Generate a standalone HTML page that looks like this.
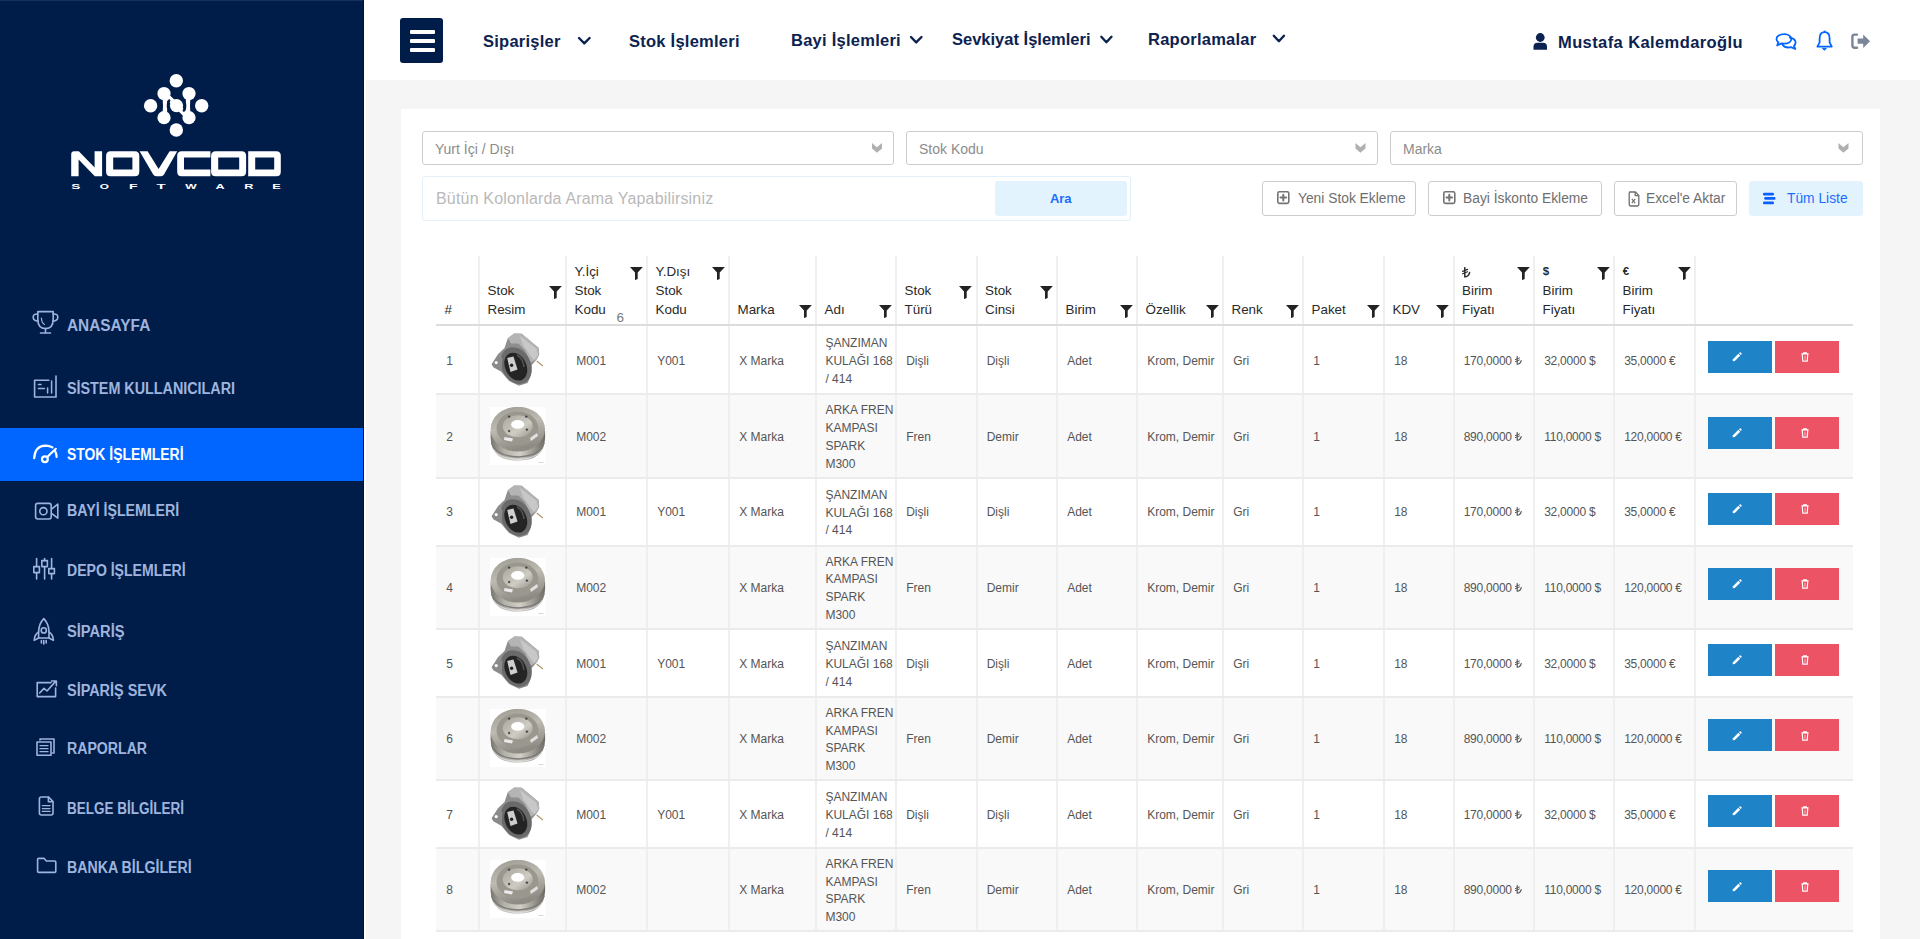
<!DOCTYPE html>
<html><head><meta charset="utf-8">
<style>
*{box-sizing:border-box;margin:0;padding:0}
html,body{width:1920px;height:939px;overflow:hidden;background:#f5f5f5;font-family:"Liberation Sans",sans-serif}
.abs{position:absolute}
#side{position:absolute;left:0;top:0;width:364px;height:939px;background:#001d4a}
#strip{position:absolute;left:364px;top:0;width:2px;height:939px;background:#fff}
#hdr{position:absolute;left:364px;top:0;width:1556px;height:80px;background:#fff}
#card{position:absolute;left:401px;top:109px;width:1479px;height:830px;background:#fff}
.mi{position:absolute;left:0;width:364px;height:54px}
.mi .t{position:absolute;left:67px;top:0;line-height:54px;font-weight:bold;font-size:15px;color:#9fb4dd;white-space:nowrap}
.mi svg{position:absolute;left:33px;top:15px}
.smt{position:absolute;left:67px;height:20px;line-height:20px;font-size:16px;font-weight:bold;white-space:nowrap;transform:scaleX(0.9);transform-origin:0 0}
.th{position:absolute;font-size:13.4px;line-height:18px;color:#2a2a2a;white-space:nowrap}
.td{position:absolute;font-size:12px;color:#555;white-space:nowrap}
.nav{position:absolute;font-weight:bold;font-size:16.5px;letter-spacing:0.25px;color:#0c2250;white-space:nowrap;line-height:20px}
.chev{position:absolute}
.sel{position:absolute;top:130.5px;height:34.5px;border:1px solid #cdcdcd;border-radius:3px;background:#fff;font-size:14px;color:#8c8c8c;line-height:34px;padding-left:12px;white-space:nowrap}
.btn{position:absolute;top:181px;height:34.5px;border:1px solid #cdcdcd;border-radius:3px;background:#fff;font-size:13.8px;color:#6e6e6e;line-height:33px;white-space:nowrap}
.pl{position:absolute;top:9.5px;width:12.3px;height:12.7px;border:1.6px solid #747474;border-radius:2px}
.pl:before{content:"";position:absolute;left:1.5px;top:3.75px;width:6.1px;height:2px;background:#747474;border-radius:1px}
.pl:after{content:"";position:absolute;left:3.55px;top:1.7px;width:2px;height:6.1px;background:#747474;border-radius:1px}
</style></head>
<body>
<svg width="0" height="0" style="position:absolute">
<defs>
<linearGradient id="gs" x1="0" y1="0" x2="1" y2="0">
<stop offset="0" stop-color="#7a776f"/><stop offset="0.25" stop-color="#b4b1a9"/><stop offset="0.55" stop-color="#d2cfc7"/><stop offset="0.8" stop-color="#99968e"/><stop offset="1" stop-color="#6c6963"/>
</linearGradient>
<linearGradient id="gt" x1="0" y1="0" x2="0.3" y2="1">
<stop offset="0" stop-color="#9c9991"/><stop offset="0.5" stop-color="#bdbab2"/><stop offset="1" stop-color="#8e8b84"/>
</linearGradient>
<linearGradient id="gh" x1="0" y1="0" x2="1" y2="1">
<stop offset="0" stop-color="#a7a49c"/><stop offset="0.6" stop-color="#cfccc4"/><stop offset="1" stop-color="#97948c"/>
</linearGradient>


</defs>
</svg>

<div id="side">
<svg class="abs" style="left:140px;top:70px" width="72" height="70" viewBox="0 0 72 70">
<g fill="#fff" stroke="none">
<circle cx="36.3" cy="10.8" r="6.7"/>
<circle cx="24" cy="23.5" r="6.6"/>
<circle cx="49" cy="23.5" r="6.6"/>
<circle cx="10.6" cy="35.8" r="6.7"/>
<circle cx="36.5" cy="35.6" r="6.6"/>
<circle cx="61.7" cy="35.8" r="6.7"/>
<circle cx="24" cy="47.7" r="6.6"/>
<circle cx="49" cy="47.7" r="6.6"/>
<circle cx="36.3" cy="60" r="6.7"/>
</g>
<g stroke="#fff" stroke-width="4.4" fill="none" stroke-linecap="round">
<path d="M24 23.5 Q26.4 35.6 24 47.7"/>
<path d="M49 23.5 Q46.6 35.6 49 47.7"/>
<path d="M24 23.5 L36.5 35.6" stroke-width="5.5"/>
<path d="M49 47.7 L36.5 35.6" stroke-width="5.5"/>
</g>
<g stroke="#001d4a" stroke-width="2.4" fill="none" stroke-linecap="round">
<path d="M31.2 42.2 A8.6 8.6 0 0 1 29.2 30.6"/>
<path d="M41.8 29 A8.6 8.6 0 0 1 43.8 40.6"/>
</g>
</svg>
<svg class="abs" style="left:66px;top:145px" width="220" height="50" viewBox="0 0 220 50">
<g fill="#fff" fill-rule="evenodd">
<path d="M5.2 31.2V9.3Q5.2 6.3 8.2 6.3H12.8L28.6 22.6V6.3H36.1V31.2H28.8L12.6 14.6V31.2Z"/>
<path d="M44.6 6.3H68.8Q73.3 6.3 73.3 10.8V26.7Q73.3 31.2 68.8 31.2H44.6Q40.1 31.2 40.1 26.7V10.8Q40.1 6.3 44.6 6.3ZM47.2 12.6V24.6H66.4V12.6Z"/>
<path d="M73.6 6.3H81.6L92.6 24L103.6 6.3H111.2L98 29.6Q97 31.2 95 31.2H90.2Q88.2 31.2 87.2 29.6Z"/>
<path d="M144.4 6.3H115.7Q111.2 6.3 111.2 10.8V26.7Q111.2 31.2 115.7 31.2H144.4V24.6H118V12.6H144.4Z"/>
<path d="M149.6 6.3H175.6Q180.1 6.3 180.1 10.8V26.7Q180.1 31.2 175.6 31.2H149.6Q145.1 31.2 145.1 26.7V10.8Q145.1 6.3 149.6 6.3ZM152.2 12.6V24.6H173.2V12.6Z"/>
<path d="M182.2 6.3H210.3Q214.8 6.3 214.8 10.8V26.7Q214.8 31.2 210.3 31.2H182.2ZM189.2 12.6V24.6H208.2V12.6Z"/>
</g>
<g fill="#fff" font-family="Liberation Sans" font-weight="bold" font-size="7.8">
<text x="5.2" y="44.1" textLength="9.1" lengthAdjust="spacingAndGlyphs">S</text>
<text x="33.8" y="44.1" textLength="9.2" lengthAdjust="spacingAndGlyphs">O</text>
<text x="63" y="44.1" textLength="8.6" lengthAdjust="spacingAndGlyphs">F</text>
<text x="90.5" y="44.1" textLength="9.2" lengthAdjust="spacingAndGlyphs">T</text>
<text x="119.2" y="44.1" textLength="11.4" lengthAdjust="spacingAndGlyphs">W</text>
<text x="149.5" y="44.1" textLength="9.2" lengthAdjust="spacingAndGlyphs">A</text>
<text x="178.2" y="44.1" textLength="9.2" lengthAdjust="spacingAndGlyphs">R</text>
<text x="206.3" y="44.1" textLength="8.5" lengthAdjust="spacingAndGlyphs">E</text>
</g>
</svg>
<div class="abs" style="left:0;top:428px;width:364px;height:53px;background:#0066ff"></div>
<!-- icons -->
<svg class="abs" style="left:0;top:0" width="364" height="939" viewBox="0 0 364 939" fill="none" stroke="#9fb4dd" stroke-width="1.6" stroke-linecap="round" stroke-linejoin="round">
<!-- trophy -->
<path d="M37.8 311.6H53.2V319Q53.2 328.6 45.5 328.6Q37.8 328.6 37.8 319Z"/>
<path d="M37.8 314Q33.2 313.6 33.2 317.2Q33.2 320.8 38.2 321.2"/>
<path d="M53.2 314Q57.8 313.6 57.8 317.2Q57.8 320.8 52.8 321.2"/>
<path d="M45.5 328.6V332.8M40.5 333H50.5"/>
<path d="M41.4 318Q41.6 322.6 44.4 324.4" stroke-width="1.2"/>
<!-- sistem kullanicilari -->
<path d="M34.6 380.2H48.8M34.6 380.2V397H56.2M56 376V396.5"/>
<path d="M38.4 384.6H41M38.4 388.6H44.4M47.6 388V393M51.6 381V393" stroke-width="1.5"/>
</svg>
<svg class="abs" style="left:0;top:0" width="364" height="939" viewBox="0 0 364 939" fill="none" stroke="#fff" stroke-width="2" stroke-linecap="round" stroke-linejoin="round">
<!-- gauge -->
<path d="M34.2 458.2Q34.8 446 45.4 445.6Q49.6 445.6 52.4 447.4" stroke-width="2.2"/>
<path d="M55.2 451.2Q56.6 453.8 56.6 457" stroke-width="2.2"/>
<circle cx="44.9" cy="459.2" r="2.9" stroke-width="2.2"/>
<path d="M47 457.2L55.8 448.8" stroke-width="2.2"/>
</svg>
<svg class="abs" style="left:0;top:0" width="364" height="939" viewBox="0 0 364 939" fill="none" stroke="#9fb4dd" stroke-width="1.6" stroke-linecap="round" stroke-linejoin="round">
<!-- camera -->
<rect x="35.6" y="503.4" width="15.6" height="15.6" rx="2.2"/>
<circle cx="43.4" cy="511.2" r="3.6"/>
<path d="M52.2 508.6L57.8 504.2V518.2L52.2 513.8"/>
<!-- sliders -->
<path d="M36.6 558.6V566.6M36.6 572.6V579M44.6 558.6V560.6M44.6 566.6V579M51.6 558.6V568.6M51.6 573.6V579"/>
<rect x="33.8" y="566.6" width="5.6" height="6"/>
<rect x="41.8" y="560.6" width="5.6" height="6"/>
<rect x="48.8" y="568.6" width="5.6" height="5"/>
<!-- rocket -->
<path d="M43.8 618.6Q38.6 624 38.6 632V638H49V632Q49 624 43.8 618.6Z"/>
<circle cx="43.8" cy="630.4" r="2.6"/>
<path d="M38.6 632Q34.4 634.6 34.2 640.4L38.6 638M49 632Q53.2 634.6 53.4 640.4L49 638"/>
<path d="M41.4 640.6V643M43.8 640.6V644M46.2 640.6V643"/>
<!-- chart -->
<path d="M51 682.6H37.2V696.6H55.6V688"/>
<path d="M39.6 693L44 688.4L47 691L55.6 681.4M51.6 681H56.4V685.8"/>
<!-- stacked docs -->
<rect x="37" y="742" width="14" height="13.2"/>
<path d="M40 740V739H54V753H52.6"/>
<path d="M40 745.6H48M40 748.6H48M40 751.6H48" stroke-width="1.4"/>
<!-- document -->
<path d="M41.4 797H48.6L53 801.6V813Q53 815 51 815H41.4Q39.4 815 39.4 813V799Q39.4 797 41.4 797Z"/>
<path d="M48.4 797.4V801.8H52.6"/>
<path d="M42.4 805.6H50M42.4 808.6H50M42.4 811.4H50" stroke-width="1.4"/>
<!-- folder -->
<path d="M37.6 859.6Q37.6 858.4 38.8 858.4H44.2L46.4 861H54.6Q55.8 861 55.8 862.2V871.2Q55.8 872.4 54.6 872.4H38.8Q37.6 872.4 37.6 871.2Z"/>
</svg>
<div class="smt" style="top:315.6px;color:#9fb4dd;transform:scaleX(0.962)">ANASAYFA</div>
<div class="smt" style="top:379.3px;color:#9fb4dd;transform:scaleX(0.896)">SİSTEM KULLANICILARI</div>
<div class="smt" style="top:445.0px;color:#fff;transform:scaleX(0.870)">STOK İŞLEMLERİ</div>
<div class="smt" style="top:501.3px;color:#9fb4dd;transform:scaleX(0.886)">BAYİ İŞLEMLERİ</div>
<div class="smt" style="top:561.3px;color:#9fb4dd;transform:scaleX(0.878)">DEPO İŞLEMLERİ</div>
<div class="smt" style="top:622.3px;color:#9fb4dd;transform:scaleX(0.916)">SİPARİŞ</div>
<div class="smt" style="top:681.2px;color:#9fb4dd;transform:scaleX(0.902)">SİPARİŞ SEVK</div>
<div class="smt" style="top:739.4px;color:#9fb4dd;transform:scaleX(0.883)">RAPORLAR</div>
<div class="smt" style="top:798.5px;color:#9fb4dd;transform:scaleX(0.844)">BELGE BİLGİLERİ</div>
<div class="smt" style="top:857.8px;color:#9fb4dd;transform:scaleX(0.886)">BANKA BİLGİLERİ</div>
</div>
<div id="strip"></div>
<div class="abs" style="left:0;top:0;width:364px;height:1px;background:#15305c"></div>
<div class="abs" style="left:363px;top:0;width:1px;height:939px;background:#000f3c"></div>
<div id="hdr"></div>
<div class="abs" style="left:400px;top:18px;width:43px;height:45px;background:#001d4a;border-radius:3px"></div>
<div class="abs" style="left:409.5px;top:29.5px;width:25px;height:4.4px;background:#fff;border-radius:1px"></div>
<div class="abs" style="left:409.5px;top:38.5px;width:25px;height:4.4px;background:#fff;border-radius:1px"></div>
<div class="abs" style="left:409.5px;top:47.5px;width:25px;height:4.4px;background:#fff;border-radius:1px"></div>
<div class="nav" style="left:483px;top:30.7px">Siparişler</div>
<div class="nav" style="left:629px;top:30.7px">Stok İşlemleri</div>
<div class="nav" style="left:791px;top:29.8px">Bayi İşlemleri</div>
<div class="nav" style="left:952px;top:29.4px;letter-spacing:0">Sevkiyat İşlemleri</div>
<div class="nav" style="left:1148px;top:29px">Raporlamalar</div>
<svg class="abs" style="left:0;top:0" width="1920" height="80" viewBox="0 0 1920 80" fill="none" stroke="#0c2250" stroke-width="2.4" stroke-linecap="round" stroke-linejoin="round">
<path d="M579 38L584.3 43.3L589.6 38"/>
<path d="M911 37L916.2 42.4L921.5 37"/>
<path d="M1101.3 36.8L1106.4 42.2L1111.5 36.8"/>
<path d="M1273.8 35.8L1278.9 41.2L1284 35.8"/>
</svg>
<svg class="abs" style="left:1530px;top:30px" width="20" height="22" viewBox="0 0 20 22">
<circle cx="10.25" cy="7.5" r="4.4" fill="#0c2250"/>
<path d="M3.5 19.75V16.75Q3.5 12.75 7.5 12.75H13Q17 12.75 17 16.75V19.75Z" fill="#0c2250"/>
</svg>
<div class="nav" style="left:1558px;top:32.3px;letter-spacing:0.4px">Mustafa Kalemdaroğlu</div>
<svg class="abs" style="left:1770px;top:28px" width="110" height="26" viewBox="1770 28 110 26" fill="none" stroke-linejoin="round" stroke-linecap="round">
<g stroke="#0066ff" stroke-width="1.8">
<path d="M1784.3 34.2C1788.6 34.2 1791.3 36.4 1791.3 38.9C1791.3 41.5 1788.6 43.6 1784.3 43.6C1783.4 43.6 1782.6 43.5 1781.8 43.3L1777.2 45.3L1778.4 42.2C1777.1 41.4 1776.5 40.2 1776.5 38.9C1776.5 36.4 1779.6 34.2 1784.3 34.2Z"/>
<path d="M1789.8 37.6C1793.3 38.2 1795.6 40.3 1795.6 42.6C1795.6 43.9 1795 45 1794 45.8L1795.3 49L1791 47.2C1790.2 47.4 1789.4 47.5 1788.5 47.5C1785.6 47.5 1783.2 46.2 1782.4 44.2"/>
</g>
<g stroke="#0066ff" stroke-width="1.8">
<path d="M1824.6 32.2C1821.2 32.2 1819.6 35 1819.6 38.6V42.4L1817.4 46.6H1831.8L1829.6 42.4V38.6C1829.6 35 1828 32.2 1824.6 32.2Z"/>
</g>
<path d="M1822.8 48.4H1826.4L1824.6 50Z" fill="#0066ff" stroke="#0066ff" stroke-width="1"/>
<circle cx="1824.6" cy="31.6" r="1" fill="#0066ff"/>
<g>
<path d="M1857 34.6H1854.6Q1852.4 34.6 1852.4 36.8V45.6Q1852.4 47.8 1854.6 47.8H1857" stroke="#7a8599" stroke-width="2.4"/>
<path d="M1857.6 38.6H1863.2V34.4L1870 41.2L1863.2 48V43.8H1857.6Z" fill="#7a8599"/>
</g>
</svg>

<div id="card"></div>
<div class="sel" style="left:422px;width:472px">Yurt İçi / Dışı</div>
<div class="sel" style="left:906px;width:472px">Stok Kodu</div>
<div class="sel" style="left:1390px;width:473px">Marka</div>
<svg class="abs" style="left:0;top:0" width="1920" height="240" viewBox="0 0 1920 240">
<g fill="#b0b0b0">
<path d="M872 143.1L876.9 147.2L882 143.1V148.6L876.9 152.7L872 148.6Z"/>
<path d="M1355.5 143.1L1360.4 147.2L1365.5 143.1V148.6L1360.4 152.7L1355.5 148.6Z"/>
<path d="M1838.5 143.1L1843.4 147.2L1848.5 143.1V148.6L1843.4 152.7L1838.5 148.6Z"/>
</g>
</svg>
<div class="abs" style="left:421.5px;top:176px;width:709px;height:45px;border:1px solid #e1f0fa;border-radius:3px;background:#fff"></div>
<div class="abs" style="left:436px;top:187px;font-size:16px;line-height:24px;color:#b9b9b9;white-space:nowrap;letter-spacing:0.18px">Bütün Kolonlarda Arama Yapabilirsiniz</div>
<div class="abs" style="left:994.5px;top:181px;width:132.5px;height:35px;background:#e3f3fd;border-radius:3px;text-align:center;font-size:13px;font-weight:bold;color:#1a6dff;line-height:35px">Ara</div>
<div class="btn" style="left:1262px;width:153.5px"><svg style="position:absolute;left:14px;top:9px" width="14" height="14" viewBox="0 0 14 14" fill="none" stroke="#747474"><rect x="0.8" y="0.8" width="11" height="11.6" rx="1.6" stroke-width="1.6"/><path d="M6.3 3.8V9.4M3.5 6.6H9.1" stroke-width="2" stroke-linecap="round"/></svg><span style="position:absolute;left:35px">Yeni Stok Ekleme</span></div>
<div class="btn" style="left:1428px;width:173.5px"><svg style="position:absolute;left:14px;top:9px" width="14" height="14" viewBox="0 0 14 14" fill="none" stroke="#747474"><rect x="0.8" y="0.8" width="11" height="11.6" rx="1.6" stroke-width="1.6"/><path d="M6.3 3.8V9.4M3.5 6.6H9.1" stroke-width="2" stroke-linecap="round"/></svg><span style="position:absolute;left:34px">Bayi İskonto Ekleme</span></div>
<div class="btn" style="left:1614px;width:122.5px"><svg style="position:absolute;left:12.5px;top:8.5px" width="12" height="16" viewBox="0 0 12 16" fill="none" stroke="#6e6e6e" stroke-width="1.3" stroke-linejoin="round"><path d="M1.6 1H7.4L10.8 4.4V13.6Q10.8 15 9.4 15H2.6Q1.2 15 1.2 13.6V2.4Q1.2 1 2.6 1Z"/><path d="M7.2 1.2V4.6H10.6"/><path d="M3.8 7.8L7.2 12.2M7.2 7.8L3.8 12.2" stroke-width="1.1"/></svg><span style="position:absolute;left:31px">Excel'e Aktar</span></div>
<div class="abs" style="left:1749px;top:181px;width:113.5px;height:35px;background:#e3f3fd;border-radius:3px;font-size:13.8px;color:#1a6dff;line-height:35px;white-space:nowrap"><svg style="position:absolute;left:13px;top:11px" width="14" height="13" viewBox="0 0 14 13"><rect x="1" y="0.7" width="11" height="2.7" rx="1.2" fill="#0a5fff"/><rect x="2.2" y="5.1" width="11.3" height="2.7" rx="1.2" fill="#0a5fff"/><rect x="1" y="9.5" width="11" height="2.7" rx="1.2" fill="#0a5fff"/></svg><span style="position:absolute;left:38px">Tüm Liste</span></div>

<!--TABLE-->
<div class="abs" style="left:436px;top:393.5px;width:1417px;height:83.5px;background:#f9f9f9"></div>
<div class="abs" style="left:436px;top:545px;width:1417px;height:83px;background:#f9f9f9"></div>
<div class="abs" style="left:436px;top:696.5px;width:1417px;height:82.5px;background:#f9f9f9"></div>
<div class="abs" style="left:436px;top:847.5px;width:1417px;height:82.5px;background:#f9f9f9"></div>
<div class="abs" style="left:478px;top:256px;width:2px;height:675px;background:#efefef"></div>
<div class="abs" style="left:565px;top:256px;width:2px;height:675px;background:#efefef"></div>
<div class="abs" style="left:646px;top:256px;width:2px;height:675px;background:#efefef"></div>
<div class="abs" style="left:728px;top:256px;width:2px;height:675px;background:#efefef"></div>
<div class="abs" style="left:815px;top:256px;width:2px;height:675px;background:#efefef"></div>
<div class="abs" style="left:895px;top:256px;width:2px;height:675px;background:#efefef"></div>
<div class="abs" style="left:975.5px;top:256px;width:2px;height:675px;background:#efefef"></div>
<div class="abs" style="left:1056px;top:256px;width:2px;height:675px;background:#efefef"></div>
<div class="abs" style="left:1136px;top:256px;width:2px;height:675px;background:#efefef"></div>
<div class="abs" style="left:1222px;top:256px;width:2px;height:675px;background:#efefef"></div>
<div class="abs" style="left:1302px;top:256px;width:2px;height:675px;background:#efefef"></div>
<div class="abs" style="left:1383px;top:256px;width:2px;height:675px;background:#efefef"></div>
<div class="abs" style="left:1452.5px;top:256px;width:2px;height:675px;background:#efefef"></div>
<div class="abs" style="left:1533px;top:256px;width:2px;height:675px;background:#efefef"></div>
<div class="abs" style="left:1613px;top:256px;width:2px;height:675px;background:#efefef"></div>
<div class="abs" style="left:1694px;top:256px;width:2px;height:675px;background:#efefef"></div>
<div class="abs" style="left:436px;top:324px;width:1417px;height:2px;background:#dcdcdc"></div>
<div class="abs" style="left:436px;top:393.0px;width:1417px;height:2px;background:#ebebeb"></div>
<div class="abs" style="left:436px;top:476.5px;width:1417px;height:2px;background:#ebebeb"></div>
<div class="abs" style="left:436px;top:544.5px;width:1417px;height:2px;background:#ebebeb"></div>
<div class="abs" style="left:436px;top:627.5px;width:1417px;height:2px;background:#ebebeb"></div>
<div class="abs" style="left:436px;top:696.0px;width:1417px;height:2px;background:#ebebeb"></div>
<div class="abs" style="left:436px;top:778.5px;width:1417px;height:2px;background:#ebebeb"></div>
<div class="abs" style="left:436px;top:847.0px;width:1417px;height:2px;background:#ebebeb"></div>
<div class="abs" style="left:436px;top:929.5px;width:1417px;height:2px;background:#ebebeb"></div>
<div class="th" style="left:444.5px;top:301.3px">#</div>
<div class="th" style="left:487.5px;top:282.2px">Stok</div>
<div class="th" style="left:487.5px;top:301.3px">Resim</div>
<svg width="13" height="13.2" viewBox="0 0 13 13.2" style="position:absolute;left:548.6px;top:286.2px"><path d="M0 0H12.9L7.7 5.6V12.1L5 13.1V5.6Z" fill="#222"/></svg>
<div class="th" style="left:574.5px;top:263.0px">Y.İçi</div>
<div class="th" style="left:574.5px;top:282.2px">Stok</div>
<div class="th" style="left:574.5px;top:301.3px">Kodu</div>
<svg width="13" height="13.2" viewBox="0 0 13 13.2" style="position:absolute;left:629.6px;top:267.0px"><path d="M0 0H12.9L7.7 5.6V12.1L5 13.1V5.6Z" fill="#222"/></svg>
<div class="th" style="left:655.5px;top:263.0px">Y.Dışı</div>
<div class="th" style="left:655.5px;top:282.2px">Stok</div>
<div class="th" style="left:655.5px;top:301.3px">Kodu</div>
<svg width="13" height="13.2" viewBox="0 0 13 13.2" style="position:absolute;left:711.6px;top:267.0px"><path d="M0 0H12.9L7.7 5.6V12.1L5 13.1V5.6Z" fill="#222"/></svg>
<div class="th" style="left:737.5px;top:301.3px">Marka</div>
<svg width="13" height="13.2" viewBox="0 0 13 13.2" style="position:absolute;left:798.6px;top:305.3px"><path d="M0 0H12.9L7.7 5.6V12.1L5 13.1V5.6Z" fill="#222"/></svg>
<div class="th" style="left:824.5px;top:301.3px">Adı</div>
<svg width="13" height="13.2" viewBox="0 0 13 13.2" style="position:absolute;left:878.6px;top:305.3px"><path d="M0 0H12.9L7.7 5.6V12.1L5 13.1V5.6Z" fill="#222"/></svg>
<div class="th" style="left:904.5px;top:282.2px">Stok</div>
<div class="th" style="left:904.5px;top:301.3px">Türü</div>
<svg width="13" height="13.2" viewBox="0 0 13 13.2" style="position:absolute;left:959.1px;top:286.2px"><path d="M0 0H12.9L7.7 5.6V12.1L5 13.1V5.6Z" fill="#222"/></svg>
<div class="th" style="left:985.0px;top:282.2px">Stok</div>
<div class="th" style="left:985.0px;top:301.3px">Cinsi</div>
<svg width="13" height="13.2" viewBox="0 0 13 13.2" style="position:absolute;left:1039.6px;top:286.2px"><path d="M0 0H12.9L7.7 5.6V12.1L5 13.1V5.6Z" fill="#222"/></svg>
<div class="th" style="left:1065.5px;top:301.3px">Birim</div>
<svg width="13" height="13.2" viewBox="0 0 13 13.2" style="position:absolute;left:1119.6px;top:305.3px"><path d="M0 0H12.9L7.7 5.6V12.1L5 13.1V5.6Z" fill="#222"/></svg>
<div class="th" style="left:1145.5px;top:301.3px">Özellik</div>
<svg width="13" height="13.2" viewBox="0 0 13 13.2" style="position:absolute;left:1205.6px;top:305.3px"><path d="M0 0H12.9L7.7 5.6V12.1L5 13.1V5.6Z" fill="#222"/></svg>
<div class="th" style="left:1231.5px;top:301.3px">Renk</div>
<svg width="13" height="13.2" viewBox="0 0 13 13.2" style="position:absolute;left:1285.6px;top:305.3px"><path d="M0 0H12.9L7.7 5.6V12.1L5 13.1V5.6Z" fill="#222"/></svg>
<div class="th" style="left:1311.5px;top:301.3px">Paket</div>
<svg width="13" height="13.2" viewBox="0 0 13 13.2" style="position:absolute;left:1366.6px;top:305.3px"><path d="M0 0H12.9L7.7 5.6V12.1L5 13.1V5.6Z" fill="#222"/></svg>
<div class="th" style="left:1392.5px;top:301.3px">KDV</div>
<svg width="13" height="13.2" viewBox="0 0 13 13.2" style="position:absolute;left:1436.1px;top:305.3px"><path d="M0 0H12.9L7.7 5.6V12.1L5 13.1V5.6Z" fill="#222"/></svg>
<svg width="9" height="11" viewBox="0 0 9 11" style="position:absolute;left:1461.5px;top:267.1px" fill="none" stroke="#2a2a2a" stroke-width="1.5" stroke-linecap="round"><path d="M2.8 0.6V9.8Q6.6 9.8 7.6 5.6"/><path d="M0.6 4.4L5.6 2.4M0.6 6.8L5.6 4.8" stroke-width="1.2"/></svg>
<div class="th" style="left:1462.0px;top:282.2px">Birim</div>
<div class="th" style="left:1462.0px;top:301.3px">Fiyatı</div>
<svg width="13" height="13.2" viewBox="0 0 13 13.2" style="position:absolute;left:1516.6px;top:267.0px"><path d="M0 0H12.9L7.7 5.6V12.1L5 13.1V5.6Z" fill="#222"/></svg>
<div class="th" style="left:1542.8px;top:262.4px;font-size:11.5px;font-weight:bold">$</div>
<div class="th" style="left:1542.5px;top:282.2px">Birim</div>
<div class="th" style="left:1542.5px;top:301.3px">Fiyatı</div>
<svg width="13" height="13.2" viewBox="0 0 13 13.2" style="position:absolute;left:1596.6px;top:267.0px"><path d="M0 0H12.9L7.7 5.6V12.1L5 13.1V5.6Z" fill="#222"/></svg>
<div class="th" style="left:1622.8px;top:262.4px;font-size:11.5px;font-weight:bold">€</div>
<div class="th" style="left:1622.5px;top:282.2px">Birim</div>
<div class="th" style="left:1622.5px;top:301.3px">Fiyatı</div>
<svg width="13" height="13.2" viewBox="0 0 13 13.2" style="position:absolute;left:1677.6px;top:267.0px"><path d="M0 0H12.9L7.7 5.6V12.1L5 13.1V5.6Z" fill="#222"/></svg>
<div class="abs" style="left:616.5px;top:311.3px;font-size:13.5px;line-height:14px;color:#7a7a7a">6</div>
<div class="td" style="left:446.2px;top:351.65px;line-height:18px">1</div>
<svg class="abs" style="left:490px;top:330.75px" width="56" height="58" viewBox="0 0 56 58"><g>
<rect x="0" y="0" width="55.5" height="58" fill="#fff"/>
<path d="M1.6 33.2L7.9 23.3L14.5 17.05L17.8 7.15L24.4 2.5L31.7 2.85L48.8 17.05L49.2 23.65L46.8 28.3L41.6 34.2L40.2 46.1L37.6 52L29 54.7L19.1 50.05L11.2 40.8L3.3 36.2Z" fill="#8e8e8e"/>
<path d="M17.8 7.15L24.4 2.5L31.7 2.85L48.8 17.05L49.2 23.65L46.8 28.3L40.9 31.6L35 19.05L28.4 12.4L21.1 12.4Z" fill="#b4b4b4"/>
<path d="M30 5L46 17.5L48 24L44 29L40 24L33 14Z" fill="#c8c8c8"/>
<ellipse cx="26.2" cy="34.6" rx="14.6" ry="19.2" transform="rotate(-26 26.2 34.6)" fill="#6a6a6a"/>
<ellipse cx="25.8" cy="35.6" rx="10.6" ry="14.6" transform="rotate(-26 25.8 35.6)" fill="#242424"/>
<path d="M27 24Q33 27 34 36" stroke="#555" stroke-width="1.4" fill="none"/>
<path d="M17.2 27L23.5 25.5L27.5 38.5L20.5 41Z" fill="#cfcfcf"/>
<circle cx="21.6" cy="34.2" r="1.7" fill="#222"/>
<path d="M2 33L8.5 25.2L12.5 26.8L11.8 38.5L4.5 36.5Z" fill="#8a8a8a"/>
<circle cx="6.2" cy="31.6" r="1.6" fill="#fff"/>
<path d="M47 29.5L53.2 34.6L52.6 35.6L46.4 30.6Z" fill="#ad9059"/>
</g></svg>
<div class="td" style="left:576.2px;top:351.65px;line-height:18px">M001</div>
<div class="td" style="left:657.2px;top:351.65px;line-height:18px">Y001</div>
<div class="td" style="left:739.2px;top:351.65px;line-height:18px">X Marka</div>
<div class="td" style="left:825.4000000000001px;top:335.15000000000003px;line-height:17.8px">ŞANZIMAN<br>KULAĞI 168<br>/ 414</div>
<div class="td" style="left:906.2px;top:351.65px;line-height:18px">Dişli</div>
<div class="td" style="left:986.7px;top:351.65px;line-height:18px">Dişli</div>
<div class="td" style="left:1067.2px;top:351.65px;line-height:18px">Adet</div>
<div class="td" style="left:1147.2px;top:351.65px;line-height:18px">Krom, Demir</div>
<div class="td" style="left:1233.2px;top:351.65px;line-height:18px">Gri</div>
<div class="td" style="left:1313.2px;top:351.65px;line-height:18px">1</div>
<div class="td" style="left:1394.2px;top:351.65px;line-height:18px">18</div>
<div class="td" style="left:1463.7px;top:351.65px;line-height:18px;letter-spacing:-0.25px">170,0000<svg width="7" height="9" viewBox="0 0 7 9" style="display:inline-block;vertical-align:0px;margin-left:3px" fill="none" stroke="#555" stroke-width="1.2" stroke-linecap="round"><path d="M2.2 0.6V8.2Q5.4 8.2 6.2 4.6"/><path d="M0.4 3.6L4.4 2M0.4 5.6L4.4 4" stroke-width="1"/></svg></div>
<div class="td" style="left:1544.2px;top:351.65px;line-height:18px;letter-spacing:-0.25px">32,0000 $</div>
<div class="td" style="left:1624.2px;top:351.65px;line-height:18px;letter-spacing:-0.25px">35,0000 €</div>
<div class="abs" style="left:1708px;top:340.75px;width:64px;height:32px;background:#1e83c7"></div>
<div class="abs" style="left:1775px;top:340.75px;width:64px;height:32px;background:#ec5365"></div>
<svg class="abs" style="left:1732px;top:352.05px" width="10" height="10" viewBox="0 0 12 12"><path d="M1.2 8.6L7.6 2.2L9.8 4.4L3.4 10.8L0.8 11.2Z" fill="#fff"/><path d="M8.4 1.4L9.2 0.6Q9.8 0 10.4 0.6L11.4 1.6Q12 2.2 11.4 2.8L10.6 3.6Z" fill="#fff"/></svg>
<svg class="abs" style="left:1801px;top:352.05px" width="8" height="10" viewBox="0 0 9 11" fill="none" stroke="#fff" stroke-width="1.3"><path d="M0.5 2H8.5M3 2V0.8H6V2M1.4 2.4L2 10.2H7L7.6 2.4"/><path d="M4.5 4V8.6" stroke-width="1" stroke="#f8c9cf"/></svg>
<div class="td" style="left:446.2px;top:427.65px;line-height:18px">2</div>
<svg class="abs" style="left:490px;top:406.75px" width="56" height="58" viewBox="0 0 56 58"><g>
<rect x="0" y="0" width="55.5" height="58" fill="#fff"/>
<path d="M0.6 24V31Q1.5 53.7 27.8 53.7Q54.2 53.7 55.1 31V24Z" fill="url(#gs)"/>
<path d="M1.5 36Q6 49 27.8 50Q49.6 49 54.1 36" stroke="#7c7c7c" stroke-width="1.4" fill="none"/>
<path d="M3 42Q9 52 27.8 52.5Q46.6 52 52.6 42" stroke="#dcdcdc" stroke-width="1.1" fill="none"/>
<ellipse cx="27.8" cy="22.2" rx="27.2" ry="22.4" fill="url(#gt)"/>
<ellipse cx="27.5" cy="21.5" rx="21" ry="17" fill="#9a978f"/>
<ellipse cx="27.7" cy="19.2" rx="15" ry="11" fill="url(#gh)"/>
<path d="M14.5 30L23 31.5L22 34.5L14 33Z" fill="#eaeaea"/>
<path d="M40 31L47 26L48 29L41 34Z" fill="#e0e0e0"/>
<ellipse cx="27.7" cy="17.4" rx="6.6" ry="4.3" fill="#fff"/>
<circle cx="19.1" cy="9.6" r="1.2" fill="#444"/><circle cx="36.3" cy="9.6" r="1.2" fill="#444"/><circle cx="19.1" cy="24" r="1.2" fill="#555"/><circle cx="36.9" cy="22.6" r="1.2" fill="#444"/>
<rect x="48.5" y="55" width="5" height="0.8" fill="#ccc"/>
</g></svg>
<div class="td" style="left:576.2px;top:427.65px;line-height:18px">M002</div>
<div class="td" style="left:739.2px;top:427.65px;line-height:18px">X Marka</div>
<div class="td" style="left:825.4000000000001px;top:402.25px;line-height:17.8px">ARKA FREN<br>KAMPASI<br>SPARK<br>M300</div>
<div class="td" style="left:906.2px;top:427.65px;line-height:18px">Fren</div>
<div class="td" style="left:986.7px;top:427.65px;line-height:18px">Demir</div>
<div class="td" style="left:1067.2px;top:427.65px;line-height:18px">Adet</div>
<div class="td" style="left:1147.2px;top:427.65px;line-height:18px">Krom, Demir</div>
<div class="td" style="left:1233.2px;top:427.65px;line-height:18px">Gri</div>
<div class="td" style="left:1313.2px;top:427.65px;line-height:18px">1</div>
<div class="td" style="left:1394.2px;top:427.65px;line-height:18px">18</div>
<div class="td" style="left:1463.7px;top:427.65px;line-height:18px;letter-spacing:-0.25px">890,0000<svg width="7" height="9" viewBox="0 0 7 9" style="display:inline-block;vertical-align:0px;margin-left:3px" fill="none" stroke="#555" stroke-width="1.2" stroke-linecap="round"><path d="M2.2 0.6V8.2Q5.4 8.2 6.2 4.6"/><path d="M0.4 3.6L4.4 2M0.4 5.6L4.4 4" stroke-width="1"/></svg></div>
<div class="td" style="left:1544.2px;top:427.65px;line-height:18px;letter-spacing:-0.25px">110,0000 $</div>
<div class="td" style="left:1624.2px;top:427.65px;line-height:18px;letter-spacing:-0.25px">120,0000 €</div>
<div class="abs" style="left:1708px;top:416.75px;width:64px;height:32px;background:#1e83c7"></div>
<div class="abs" style="left:1775px;top:416.75px;width:64px;height:32px;background:#ec5365"></div>
<svg class="abs" style="left:1732px;top:428.05px" width="10" height="10" viewBox="0 0 12 12"><path d="M1.2 8.6L7.6 2.2L9.8 4.4L3.4 10.8L0.8 11.2Z" fill="#fff"/><path d="M8.4 1.4L9.2 0.6Q9.8 0 10.4 0.6L11.4 1.6Q12 2.2 11.4 2.8L10.6 3.6Z" fill="#fff"/></svg>
<svg class="abs" style="left:1801px;top:428.05px" width="8" height="10" viewBox="0 0 9 11" fill="none" stroke="#fff" stroke-width="1.3"><path d="M0.5 2H8.5M3 2V0.8H6V2M1.4 2.4L2 10.2H7L7.6 2.4"/><path d="M4.5 4V8.6" stroke-width="1" stroke="#f8c9cf"/></svg>
<div class="td" style="left:446.2px;top:503.4px;line-height:18px">3</div>
<svg class="abs" style="left:490px;top:482.5px" width="56" height="58" viewBox="0 0 56 58"><g>
<rect x="0" y="0" width="55.5" height="58" fill="#fff"/>
<path d="M1.6 33.2L7.9 23.3L14.5 17.05L17.8 7.15L24.4 2.5L31.7 2.85L48.8 17.05L49.2 23.65L46.8 28.3L41.6 34.2L40.2 46.1L37.6 52L29 54.7L19.1 50.05L11.2 40.8L3.3 36.2Z" fill="#8e8e8e"/>
<path d="M17.8 7.15L24.4 2.5L31.7 2.85L48.8 17.05L49.2 23.65L46.8 28.3L40.9 31.6L35 19.05L28.4 12.4L21.1 12.4Z" fill="#b4b4b4"/>
<path d="M30 5L46 17.5L48 24L44 29L40 24L33 14Z" fill="#c8c8c8"/>
<ellipse cx="26.2" cy="34.6" rx="14.6" ry="19.2" transform="rotate(-26 26.2 34.6)" fill="#6a6a6a"/>
<ellipse cx="25.8" cy="35.6" rx="10.6" ry="14.6" transform="rotate(-26 25.8 35.6)" fill="#242424"/>
<path d="M27 24Q33 27 34 36" stroke="#555" stroke-width="1.4" fill="none"/>
<path d="M17.2 27L23.5 25.5L27.5 38.5L20.5 41Z" fill="#cfcfcf"/>
<circle cx="21.6" cy="34.2" r="1.7" fill="#222"/>
<path d="M2 33L8.5 25.2L12.5 26.8L11.8 38.5L4.5 36.5Z" fill="#8a8a8a"/>
<circle cx="6.2" cy="31.6" r="1.6" fill="#fff"/>
<path d="M47 29.5L53.2 34.6L52.6 35.6L46.4 30.6Z" fill="#ad9059"/>
</g></svg>
<div class="td" style="left:576.2px;top:503.4px;line-height:18px">M001</div>
<div class="td" style="left:657.2px;top:503.4px;line-height:18px">Y001</div>
<div class="td" style="left:739.2px;top:503.4px;line-height:18px">X Marka</div>
<div class="td" style="left:825.4000000000001px;top:486.90000000000003px;line-height:17.8px">ŞANZIMAN<br>KULAĞI 168<br>/ 414</div>
<div class="td" style="left:906.2px;top:503.4px;line-height:18px">Dişli</div>
<div class="td" style="left:986.7px;top:503.4px;line-height:18px">Dişli</div>
<div class="td" style="left:1067.2px;top:503.4px;line-height:18px">Adet</div>
<div class="td" style="left:1147.2px;top:503.4px;line-height:18px">Krom, Demir</div>
<div class="td" style="left:1233.2px;top:503.4px;line-height:18px">Gri</div>
<div class="td" style="left:1313.2px;top:503.4px;line-height:18px">1</div>
<div class="td" style="left:1394.2px;top:503.4px;line-height:18px">18</div>
<div class="td" style="left:1463.7px;top:503.4px;line-height:18px;letter-spacing:-0.25px">170,0000<svg width="7" height="9" viewBox="0 0 7 9" style="display:inline-block;vertical-align:0px;margin-left:3px" fill="none" stroke="#555" stroke-width="1.2" stroke-linecap="round"><path d="M2.2 0.6V8.2Q5.4 8.2 6.2 4.6"/><path d="M0.4 3.6L4.4 2M0.4 5.6L4.4 4" stroke-width="1"/></svg></div>
<div class="td" style="left:1544.2px;top:503.4px;line-height:18px;letter-spacing:-0.25px">32,0000 $</div>
<div class="td" style="left:1624.2px;top:503.4px;line-height:18px;letter-spacing:-0.25px">35,0000 €</div>
<div class="abs" style="left:1708px;top:492.5px;width:64px;height:32px;background:#1e83c7"></div>
<div class="abs" style="left:1775px;top:492.5px;width:64px;height:32px;background:#ec5365"></div>
<svg class="abs" style="left:1732px;top:503.8px" width="10" height="10" viewBox="0 0 12 12"><path d="M1.2 8.6L7.6 2.2L9.8 4.4L3.4 10.8L0.8 11.2Z" fill="#fff"/><path d="M8.4 1.4L9.2 0.6Q9.8 0 10.4 0.6L11.4 1.6Q12 2.2 11.4 2.8L10.6 3.6Z" fill="#fff"/></svg>
<svg class="abs" style="left:1801px;top:503.8px" width="8" height="10" viewBox="0 0 9 11" fill="none" stroke="#fff" stroke-width="1.3"><path d="M0.5 2H8.5M3 2V0.8H6V2M1.4 2.4L2 10.2H7L7.6 2.4"/><path d="M4.5 4V8.6" stroke-width="1" stroke="#f8c9cf"/></svg>
<div class="td" style="left:446.2px;top:578.9px;line-height:18px">4</div>
<svg class="abs" style="left:490px;top:558.0px" width="56" height="58" viewBox="0 0 56 58"><g>
<rect x="0" y="0" width="55.5" height="58" fill="#fff"/>
<path d="M0.6 24V31Q1.5 53.7 27.8 53.7Q54.2 53.7 55.1 31V24Z" fill="url(#gs)"/>
<path d="M1.5 36Q6 49 27.8 50Q49.6 49 54.1 36" stroke="#7c7c7c" stroke-width="1.4" fill="none"/>
<path d="M3 42Q9 52 27.8 52.5Q46.6 52 52.6 42" stroke="#dcdcdc" stroke-width="1.1" fill="none"/>
<ellipse cx="27.8" cy="22.2" rx="27.2" ry="22.4" fill="url(#gt)"/>
<ellipse cx="27.5" cy="21.5" rx="21" ry="17" fill="#9a978f"/>
<ellipse cx="27.7" cy="19.2" rx="15" ry="11" fill="url(#gh)"/>
<path d="M14.5 30L23 31.5L22 34.5L14 33Z" fill="#eaeaea"/>
<path d="M40 31L47 26L48 29L41 34Z" fill="#e0e0e0"/>
<ellipse cx="27.7" cy="17.4" rx="6.6" ry="4.3" fill="#fff"/>
<circle cx="19.1" cy="9.6" r="1.2" fill="#444"/><circle cx="36.3" cy="9.6" r="1.2" fill="#444"/><circle cx="19.1" cy="24" r="1.2" fill="#555"/><circle cx="36.9" cy="22.6" r="1.2" fill="#444"/>
<rect x="48.5" y="55" width="5" height="0.8" fill="#ccc"/>
</g></svg>
<div class="td" style="left:576.2px;top:578.9px;line-height:18px">M002</div>
<div class="td" style="left:739.2px;top:578.9px;line-height:18px">X Marka</div>
<div class="td" style="left:825.4000000000001px;top:553.5px;line-height:17.8px">ARKA FREN<br>KAMPASI<br>SPARK<br>M300</div>
<div class="td" style="left:906.2px;top:578.9px;line-height:18px">Fren</div>
<div class="td" style="left:986.7px;top:578.9px;line-height:18px">Demir</div>
<div class="td" style="left:1067.2px;top:578.9px;line-height:18px">Adet</div>
<div class="td" style="left:1147.2px;top:578.9px;line-height:18px">Krom, Demir</div>
<div class="td" style="left:1233.2px;top:578.9px;line-height:18px">Gri</div>
<div class="td" style="left:1313.2px;top:578.9px;line-height:18px">1</div>
<div class="td" style="left:1394.2px;top:578.9px;line-height:18px">18</div>
<div class="td" style="left:1463.7px;top:578.9px;line-height:18px;letter-spacing:-0.25px">890,0000<svg width="7" height="9" viewBox="0 0 7 9" style="display:inline-block;vertical-align:0px;margin-left:3px" fill="none" stroke="#555" stroke-width="1.2" stroke-linecap="round"><path d="M2.2 0.6V8.2Q5.4 8.2 6.2 4.6"/><path d="M0.4 3.6L4.4 2M0.4 5.6L4.4 4" stroke-width="1"/></svg></div>
<div class="td" style="left:1544.2px;top:578.9px;line-height:18px;letter-spacing:-0.25px">110,0000 $</div>
<div class="td" style="left:1624.2px;top:578.9px;line-height:18px;letter-spacing:-0.25px">120,0000 €</div>
<div class="abs" style="left:1708px;top:568.0px;width:64px;height:32px;background:#1e83c7"></div>
<div class="abs" style="left:1775px;top:568.0px;width:64px;height:32px;background:#ec5365"></div>
<svg class="abs" style="left:1732px;top:579.3px" width="10" height="10" viewBox="0 0 12 12"><path d="M1.2 8.6L7.6 2.2L9.8 4.4L3.4 10.8L0.8 11.2Z" fill="#fff"/><path d="M8.4 1.4L9.2 0.6Q9.8 0 10.4 0.6L11.4 1.6Q12 2.2 11.4 2.8L10.6 3.6Z" fill="#fff"/></svg>
<svg class="abs" style="left:1801px;top:579.3px" width="8" height="10" viewBox="0 0 9 11" fill="none" stroke="#fff" stroke-width="1.3"><path d="M0.5 2H8.5M3 2V0.8H6V2M1.4 2.4L2 10.2H7L7.6 2.4"/><path d="M4.5 4V8.6" stroke-width="1" stroke="#f8c9cf"/></svg>
<div class="td" style="left:446.2px;top:654.65px;line-height:18px">5</div>
<svg class="abs" style="left:490px;top:633.75px" width="56" height="58" viewBox="0 0 56 58"><g>
<rect x="0" y="0" width="55.5" height="58" fill="#fff"/>
<path d="M1.6 33.2L7.9 23.3L14.5 17.05L17.8 7.15L24.4 2.5L31.7 2.85L48.8 17.05L49.2 23.65L46.8 28.3L41.6 34.2L40.2 46.1L37.6 52L29 54.7L19.1 50.05L11.2 40.8L3.3 36.2Z" fill="#8e8e8e"/>
<path d="M17.8 7.15L24.4 2.5L31.7 2.85L48.8 17.05L49.2 23.65L46.8 28.3L40.9 31.6L35 19.05L28.4 12.4L21.1 12.4Z" fill="#b4b4b4"/>
<path d="M30 5L46 17.5L48 24L44 29L40 24L33 14Z" fill="#c8c8c8"/>
<ellipse cx="26.2" cy="34.6" rx="14.6" ry="19.2" transform="rotate(-26 26.2 34.6)" fill="#6a6a6a"/>
<ellipse cx="25.8" cy="35.6" rx="10.6" ry="14.6" transform="rotate(-26 25.8 35.6)" fill="#242424"/>
<path d="M27 24Q33 27 34 36" stroke="#555" stroke-width="1.4" fill="none"/>
<path d="M17.2 27L23.5 25.5L27.5 38.5L20.5 41Z" fill="#cfcfcf"/>
<circle cx="21.6" cy="34.2" r="1.7" fill="#222"/>
<path d="M2 33L8.5 25.2L12.5 26.8L11.8 38.5L4.5 36.5Z" fill="#8a8a8a"/>
<circle cx="6.2" cy="31.6" r="1.6" fill="#fff"/>
<path d="M47 29.5L53.2 34.6L52.6 35.6L46.4 30.6Z" fill="#ad9059"/>
</g></svg>
<div class="td" style="left:576.2px;top:654.65px;line-height:18px">M001</div>
<div class="td" style="left:657.2px;top:654.65px;line-height:18px">Y001</div>
<div class="td" style="left:739.2px;top:654.65px;line-height:18px">X Marka</div>
<div class="td" style="left:825.4000000000001px;top:638.15px;line-height:17.8px">ŞANZIMAN<br>KULAĞI 168<br>/ 414</div>
<div class="td" style="left:906.2px;top:654.65px;line-height:18px">Dişli</div>
<div class="td" style="left:986.7px;top:654.65px;line-height:18px">Dişli</div>
<div class="td" style="left:1067.2px;top:654.65px;line-height:18px">Adet</div>
<div class="td" style="left:1147.2px;top:654.65px;line-height:18px">Krom, Demir</div>
<div class="td" style="left:1233.2px;top:654.65px;line-height:18px">Gri</div>
<div class="td" style="left:1313.2px;top:654.65px;line-height:18px">1</div>
<div class="td" style="left:1394.2px;top:654.65px;line-height:18px">18</div>
<div class="td" style="left:1463.7px;top:654.65px;line-height:18px;letter-spacing:-0.25px">170,0000<svg width="7" height="9" viewBox="0 0 7 9" style="display:inline-block;vertical-align:0px;margin-left:3px" fill="none" stroke="#555" stroke-width="1.2" stroke-linecap="round"><path d="M2.2 0.6V8.2Q5.4 8.2 6.2 4.6"/><path d="M0.4 3.6L4.4 2M0.4 5.6L4.4 4" stroke-width="1"/></svg></div>
<div class="td" style="left:1544.2px;top:654.65px;line-height:18px;letter-spacing:-0.25px">32,0000 $</div>
<div class="td" style="left:1624.2px;top:654.65px;line-height:18px;letter-spacing:-0.25px">35,0000 €</div>
<div class="abs" style="left:1708px;top:643.75px;width:64px;height:32px;background:#1e83c7"></div>
<div class="abs" style="left:1775px;top:643.75px;width:64px;height:32px;background:#ec5365"></div>
<svg class="abs" style="left:1732px;top:655.05px" width="10" height="10" viewBox="0 0 12 12"><path d="M1.2 8.6L7.6 2.2L9.8 4.4L3.4 10.8L0.8 11.2Z" fill="#fff"/><path d="M8.4 1.4L9.2 0.6Q9.8 0 10.4 0.6L11.4 1.6Q12 2.2 11.4 2.8L10.6 3.6Z" fill="#fff"/></svg>
<svg class="abs" style="left:1801px;top:655.05px" width="8" height="10" viewBox="0 0 9 11" fill="none" stroke="#fff" stroke-width="1.3"><path d="M0.5 2H8.5M3 2V0.8H6V2M1.4 2.4L2 10.2H7L7.6 2.4"/><path d="M4.5 4V8.6" stroke-width="1" stroke="#f8c9cf"/></svg>
<div class="td" style="left:446.2px;top:730.15px;line-height:18px">6</div>
<svg class="abs" style="left:490px;top:709.25px" width="56" height="58" viewBox="0 0 56 58"><g>
<rect x="0" y="0" width="55.5" height="58" fill="#fff"/>
<path d="M0.6 24V31Q1.5 53.7 27.8 53.7Q54.2 53.7 55.1 31V24Z" fill="url(#gs)"/>
<path d="M1.5 36Q6 49 27.8 50Q49.6 49 54.1 36" stroke="#7c7c7c" stroke-width="1.4" fill="none"/>
<path d="M3 42Q9 52 27.8 52.5Q46.6 52 52.6 42" stroke="#dcdcdc" stroke-width="1.1" fill="none"/>
<ellipse cx="27.8" cy="22.2" rx="27.2" ry="22.4" fill="url(#gt)"/>
<ellipse cx="27.5" cy="21.5" rx="21" ry="17" fill="#9a978f"/>
<ellipse cx="27.7" cy="19.2" rx="15" ry="11" fill="url(#gh)"/>
<path d="M14.5 30L23 31.5L22 34.5L14 33Z" fill="#eaeaea"/>
<path d="M40 31L47 26L48 29L41 34Z" fill="#e0e0e0"/>
<ellipse cx="27.7" cy="17.4" rx="6.6" ry="4.3" fill="#fff"/>
<circle cx="19.1" cy="9.6" r="1.2" fill="#444"/><circle cx="36.3" cy="9.6" r="1.2" fill="#444"/><circle cx="19.1" cy="24" r="1.2" fill="#555"/><circle cx="36.9" cy="22.6" r="1.2" fill="#444"/>
<rect x="48.5" y="55" width="5" height="0.8" fill="#ccc"/>
</g></svg>
<div class="td" style="left:576.2px;top:730.15px;line-height:18px">M002</div>
<div class="td" style="left:739.2px;top:730.15px;line-height:18px">X Marka</div>
<div class="td" style="left:825.4000000000001px;top:704.75px;line-height:17.8px">ARKA FREN<br>KAMPASI<br>SPARK<br>M300</div>
<div class="td" style="left:906.2px;top:730.15px;line-height:18px">Fren</div>
<div class="td" style="left:986.7px;top:730.15px;line-height:18px">Demir</div>
<div class="td" style="left:1067.2px;top:730.15px;line-height:18px">Adet</div>
<div class="td" style="left:1147.2px;top:730.15px;line-height:18px">Krom, Demir</div>
<div class="td" style="left:1233.2px;top:730.15px;line-height:18px">Gri</div>
<div class="td" style="left:1313.2px;top:730.15px;line-height:18px">1</div>
<div class="td" style="left:1394.2px;top:730.15px;line-height:18px">18</div>
<div class="td" style="left:1463.7px;top:730.15px;line-height:18px;letter-spacing:-0.25px">890,0000<svg width="7" height="9" viewBox="0 0 7 9" style="display:inline-block;vertical-align:0px;margin-left:3px" fill="none" stroke="#555" stroke-width="1.2" stroke-linecap="round"><path d="M2.2 0.6V8.2Q5.4 8.2 6.2 4.6"/><path d="M0.4 3.6L4.4 2M0.4 5.6L4.4 4" stroke-width="1"/></svg></div>
<div class="td" style="left:1544.2px;top:730.15px;line-height:18px;letter-spacing:-0.25px">110,0000 $</div>
<div class="td" style="left:1624.2px;top:730.15px;line-height:18px;letter-spacing:-0.25px">120,0000 €</div>
<div class="abs" style="left:1708px;top:719.25px;width:64px;height:32px;background:#1e83c7"></div>
<div class="abs" style="left:1775px;top:719.25px;width:64px;height:32px;background:#ec5365"></div>
<svg class="abs" style="left:1732px;top:730.55px" width="10" height="10" viewBox="0 0 12 12"><path d="M1.2 8.6L7.6 2.2L9.8 4.4L3.4 10.8L0.8 11.2Z" fill="#fff"/><path d="M8.4 1.4L9.2 0.6Q9.8 0 10.4 0.6L11.4 1.6Q12 2.2 11.4 2.8L10.6 3.6Z" fill="#fff"/></svg>
<svg class="abs" style="left:1801px;top:730.55px" width="8" height="10" viewBox="0 0 9 11" fill="none" stroke="#fff" stroke-width="1.3"><path d="M0.5 2H8.5M3 2V0.8H6V2M1.4 2.4L2 10.2H7L7.6 2.4"/><path d="M4.5 4V8.6" stroke-width="1" stroke="#f8c9cf"/></svg>
<div class="td" style="left:446.2px;top:805.65px;line-height:18px">7</div>
<svg class="abs" style="left:490px;top:784.75px" width="56" height="58" viewBox="0 0 56 58"><g>
<rect x="0" y="0" width="55.5" height="58" fill="#fff"/>
<path d="M1.6 33.2L7.9 23.3L14.5 17.05L17.8 7.15L24.4 2.5L31.7 2.85L48.8 17.05L49.2 23.65L46.8 28.3L41.6 34.2L40.2 46.1L37.6 52L29 54.7L19.1 50.05L11.2 40.8L3.3 36.2Z" fill="#8e8e8e"/>
<path d="M17.8 7.15L24.4 2.5L31.7 2.85L48.8 17.05L49.2 23.65L46.8 28.3L40.9 31.6L35 19.05L28.4 12.4L21.1 12.4Z" fill="#b4b4b4"/>
<path d="M30 5L46 17.5L48 24L44 29L40 24L33 14Z" fill="#c8c8c8"/>
<ellipse cx="26.2" cy="34.6" rx="14.6" ry="19.2" transform="rotate(-26 26.2 34.6)" fill="#6a6a6a"/>
<ellipse cx="25.8" cy="35.6" rx="10.6" ry="14.6" transform="rotate(-26 25.8 35.6)" fill="#242424"/>
<path d="M27 24Q33 27 34 36" stroke="#555" stroke-width="1.4" fill="none"/>
<path d="M17.2 27L23.5 25.5L27.5 38.5L20.5 41Z" fill="#cfcfcf"/>
<circle cx="21.6" cy="34.2" r="1.7" fill="#222"/>
<path d="M2 33L8.5 25.2L12.5 26.8L11.8 38.5L4.5 36.5Z" fill="#8a8a8a"/>
<circle cx="6.2" cy="31.6" r="1.6" fill="#fff"/>
<path d="M47 29.5L53.2 34.6L52.6 35.6L46.4 30.6Z" fill="#ad9059"/>
</g></svg>
<div class="td" style="left:576.2px;top:805.65px;line-height:18px">M001</div>
<div class="td" style="left:657.2px;top:805.65px;line-height:18px">Y001</div>
<div class="td" style="left:739.2px;top:805.65px;line-height:18px">X Marka</div>
<div class="td" style="left:825.4000000000001px;top:789.15px;line-height:17.8px">ŞANZIMAN<br>KULAĞI 168<br>/ 414</div>
<div class="td" style="left:906.2px;top:805.65px;line-height:18px">Dişli</div>
<div class="td" style="left:986.7px;top:805.65px;line-height:18px">Dişli</div>
<div class="td" style="left:1067.2px;top:805.65px;line-height:18px">Adet</div>
<div class="td" style="left:1147.2px;top:805.65px;line-height:18px">Krom, Demir</div>
<div class="td" style="left:1233.2px;top:805.65px;line-height:18px">Gri</div>
<div class="td" style="left:1313.2px;top:805.65px;line-height:18px">1</div>
<div class="td" style="left:1394.2px;top:805.65px;line-height:18px">18</div>
<div class="td" style="left:1463.7px;top:805.65px;line-height:18px;letter-spacing:-0.25px">170,0000<svg width="7" height="9" viewBox="0 0 7 9" style="display:inline-block;vertical-align:0px;margin-left:3px" fill="none" stroke="#555" stroke-width="1.2" stroke-linecap="round"><path d="M2.2 0.6V8.2Q5.4 8.2 6.2 4.6"/><path d="M0.4 3.6L4.4 2M0.4 5.6L4.4 4" stroke-width="1"/></svg></div>
<div class="td" style="left:1544.2px;top:805.65px;line-height:18px;letter-spacing:-0.25px">32,0000 $</div>
<div class="td" style="left:1624.2px;top:805.65px;line-height:18px;letter-spacing:-0.25px">35,0000 €</div>
<div class="abs" style="left:1708px;top:794.75px;width:64px;height:32px;background:#1e83c7"></div>
<div class="abs" style="left:1775px;top:794.75px;width:64px;height:32px;background:#ec5365"></div>
<svg class="abs" style="left:1732px;top:806.05px" width="10" height="10" viewBox="0 0 12 12"><path d="M1.2 8.6L7.6 2.2L9.8 4.4L3.4 10.8L0.8 11.2Z" fill="#fff"/><path d="M8.4 1.4L9.2 0.6Q9.8 0 10.4 0.6L11.4 1.6Q12 2.2 11.4 2.8L10.6 3.6Z" fill="#fff"/></svg>
<svg class="abs" style="left:1801px;top:806.05px" width="8" height="10" viewBox="0 0 9 11" fill="none" stroke="#fff" stroke-width="1.3"><path d="M0.5 2H8.5M3 2V0.8H6V2M1.4 2.4L2 10.2H7L7.6 2.4"/><path d="M4.5 4V8.6" stroke-width="1" stroke="#f8c9cf"/></svg>
<div class="td" style="left:446.2px;top:881.15px;line-height:18px">8</div>
<svg class="abs" style="left:490px;top:860.25px" width="56" height="58" viewBox="0 0 56 58"><g>
<rect x="0" y="0" width="55.5" height="58" fill="#fff"/>
<path d="M0.6 24V31Q1.5 53.7 27.8 53.7Q54.2 53.7 55.1 31V24Z" fill="url(#gs)"/>
<path d="M1.5 36Q6 49 27.8 50Q49.6 49 54.1 36" stroke="#7c7c7c" stroke-width="1.4" fill="none"/>
<path d="M3 42Q9 52 27.8 52.5Q46.6 52 52.6 42" stroke="#dcdcdc" stroke-width="1.1" fill="none"/>
<ellipse cx="27.8" cy="22.2" rx="27.2" ry="22.4" fill="url(#gt)"/>
<ellipse cx="27.5" cy="21.5" rx="21" ry="17" fill="#9a978f"/>
<ellipse cx="27.7" cy="19.2" rx="15" ry="11" fill="url(#gh)"/>
<path d="M14.5 30L23 31.5L22 34.5L14 33Z" fill="#eaeaea"/>
<path d="M40 31L47 26L48 29L41 34Z" fill="#e0e0e0"/>
<ellipse cx="27.7" cy="17.4" rx="6.6" ry="4.3" fill="#fff"/>
<circle cx="19.1" cy="9.6" r="1.2" fill="#444"/><circle cx="36.3" cy="9.6" r="1.2" fill="#444"/><circle cx="19.1" cy="24" r="1.2" fill="#555"/><circle cx="36.9" cy="22.6" r="1.2" fill="#444"/>
<rect x="48.5" y="55" width="5" height="0.8" fill="#ccc"/>
</g></svg>
<div class="td" style="left:576.2px;top:881.15px;line-height:18px">M002</div>
<div class="td" style="left:739.2px;top:881.15px;line-height:18px">X Marka</div>
<div class="td" style="left:825.4000000000001px;top:855.75px;line-height:17.8px">ARKA FREN<br>KAMPASI<br>SPARK<br>M300</div>
<div class="td" style="left:906.2px;top:881.15px;line-height:18px">Fren</div>
<div class="td" style="left:986.7px;top:881.15px;line-height:18px">Demir</div>
<div class="td" style="left:1067.2px;top:881.15px;line-height:18px">Adet</div>
<div class="td" style="left:1147.2px;top:881.15px;line-height:18px">Krom, Demir</div>
<div class="td" style="left:1233.2px;top:881.15px;line-height:18px">Gri</div>
<div class="td" style="left:1313.2px;top:881.15px;line-height:18px">1</div>
<div class="td" style="left:1394.2px;top:881.15px;line-height:18px">18</div>
<div class="td" style="left:1463.7px;top:881.15px;line-height:18px;letter-spacing:-0.25px">890,0000<svg width="7" height="9" viewBox="0 0 7 9" style="display:inline-block;vertical-align:0px;margin-left:3px" fill="none" stroke="#555" stroke-width="1.2" stroke-linecap="round"><path d="M2.2 0.6V8.2Q5.4 8.2 6.2 4.6"/><path d="M0.4 3.6L4.4 2M0.4 5.6L4.4 4" stroke-width="1"/></svg></div>
<div class="td" style="left:1544.2px;top:881.15px;line-height:18px;letter-spacing:-0.25px">110,0000 $</div>
<div class="td" style="left:1624.2px;top:881.15px;line-height:18px;letter-spacing:-0.25px">120,0000 €</div>
<div class="abs" style="left:1708px;top:870.25px;width:64px;height:32px;background:#1e83c7"></div>
<div class="abs" style="left:1775px;top:870.25px;width:64px;height:32px;background:#ec5365"></div>
<svg class="abs" style="left:1732px;top:881.55px" width="10" height="10" viewBox="0 0 12 12"><path d="M1.2 8.6L7.6 2.2L9.8 4.4L3.4 10.8L0.8 11.2Z" fill="#fff"/><path d="M8.4 1.4L9.2 0.6Q9.8 0 10.4 0.6L11.4 1.6Q12 2.2 11.4 2.8L10.6 3.6Z" fill="#fff"/></svg>
<svg class="abs" style="left:1801px;top:881.55px" width="8" height="10" viewBox="0 0 9 11" fill="none" stroke="#fff" stroke-width="1.3"><path d="M0.5 2H8.5M3 2V0.8H6V2M1.4 2.4L2 10.2H7L7.6 2.4"/><path d="M4.5 4V8.6" stroke-width="1" stroke="#f8c9cf"/></svg>
<!--/TABLE-->
</body></html>
